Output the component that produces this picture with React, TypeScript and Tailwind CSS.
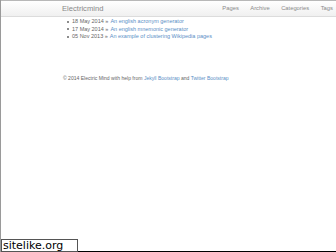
const posts = [
  { date: '18 May 2014', title: 'An english acronym generator' },
  { date: '17 May 2014', title: 'An english mnemonic generator' },
  { date: '05 Nov 2013', title: 'An example of clustering Wikipedia pages' },
];

const navItems = ['Pages', 'Archive', 'Categories', 'Tags'];

export default function App() {
  return (
    <div
      className="relative h-[252px] w-[336px] overflow-hidden bg-white border-l border-[#9a9a9a]"
      style={{ fontFamily: '"Liberation Sans", Arial, sans-serif' }}
    >
      <div className="h-[17px] border-t border-b border-t-[#b8b8b8] border-b-[#dcdcdc] bg-gradient-to-b from-[#ffffff] to-[#f0f0f0]">
        <div className="flex h-full items-center pl-[61px] whitespace-nowrap">
          <span className="text-[7.6px] leading-none text-[#888888]">Electricmind</span>
          <ul className="ml-[119px] flex gap-[11.5px] text-[5.8px] leading-none text-[#8a8a8a]">
            {navItems.map((n) => (
              <li key={n}>{n}</li>
            ))}
          </ul>
        </div>
      </div>

      <ul className="mt-[1px] pl-[66px] text-[5.5px] leading-[7.6px] text-[#666]">
        {posts.map((p) => (
          <li key={p.date} className="flex items-center whitespace-nowrap">
            <span className="mr-[3px] inline-block h-[2px] w-[2px] rounded-full bg-[#666]" />
            <span>{p.date} &raquo; </span>
            <span className="ml-[2px] text-[#5a8fc6]">{p.title}</span>
          </li>
        ))}
      </ul>

      <p className="mt-[35px] pl-[62px] text-[5.05px] leading-none whitespace-nowrap text-[#666]">
        &copy; 2014 Electric Mind with help from{' '}
        <span className="text-[#5a8fc6]">Jekyll Bootstrap</span> and{' '}
        <span className="text-[#5a8fc6]">Twitter Bootstrap</span>
      </p>

      <div className="absolute bottom-0 left-0 right-0 h-[1px] bg-black" />
      <div
        className="absolute bottom-0 left-0 flex h-[13px] w-[77px] items-center border border-[#555] bg-white pl-[1px] text-[11px] leading-none text-black"
        style={{ fontFamily: '"DejaVu Sans", Verdana, sans-serif' }}
      >
        sitelike.org
      </div>
    </div>
  );
}
